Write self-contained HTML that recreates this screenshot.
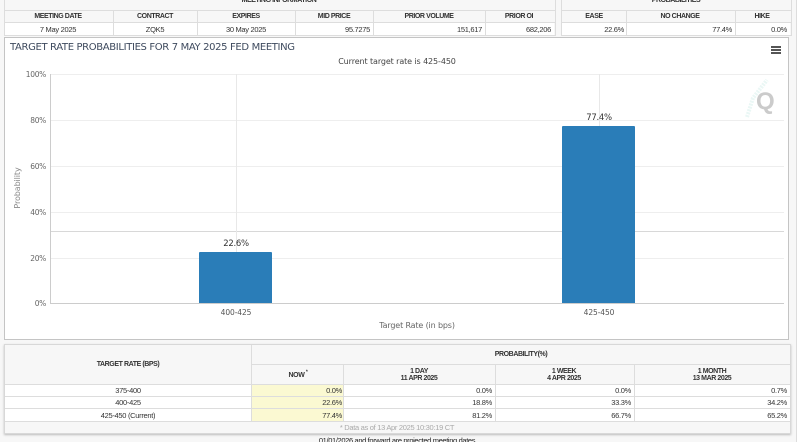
<!DOCTYPE html>
<html><head><meta charset="utf-8"><style>
html,body{margin:0;padding:0;background:#f7f7f7;}
#p{position:relative;width:800px;height:442px;overflow:hidden;background:#f7f7f7;font-family:"Liberation Sans",sans-serif;filter:blur(.35px);}
.a{position:absolute;}
.t{position:absolute;white-space:nowrap;line-height:1;}
.c{transform:translateX(-50%);}
.r{transform:translateX(-100%);}
.h{font-size:7px;font-weight:bold;color:#333;letter-spacing:-.42px;}
.v{font-size:7.5px;color:#333;letter-spacing:-.3px;}
.d{font-family:"DejaVu Sans",sans-serif;}
.y{font-size:7.5px;color:#666;letter-spacing:-.3px;}
.w{background:#fff;}
.l{position:absolute;background:#ddd;}
</style></head><body><div id="p">
<!-- top tables -->
<div class="a" style="left:4px;top:0;width:550px;height:35px;border:solid #ddd;border-width:0 1px 1px 1px"></div>
<div class="a" style="left:561px;top:0;width:229px;height:35px;border:solid #ddd;border-width:0 1px 1px 1px"></div>
<div class="a w" style="left:5px;top:23px;width:549px;height:12px"></div>
<div class="a w" style="left:562px;top:23px;width:228px;height:12px"></div>
<div class="l" style="left:4px;top:10px;width:551px;height:1px"></div>
<div class="l" style="left:4px;top:22px;width:551px;height:1px"></div>
<div class="l" style="left:561px;top:10px;width:230px;height:1px"></div>
<div class="l" style="left:561px;top:22px;width:230px;height:1px"></div>
<div class="l" style="left:113px;top:11px;width:1px;height:24px"></div>
<div class="l" style="left:197px;top:11px;width:1px;height:24px"></div>
<div class="l" style="left:295px;top:11px;width:1px;height:24px"></div>
<div class="l" style="left:373px;top:11px;width:1px;height:24px"></div>
<div class="l" style="left:485px;top:11px;width:1px;height:24px"></div>
<div class="l" style="left:626px;top:11px;width:1px;height:24px"></div>
<div class="l" style="left:735px;top:11px;width:1px;height:24px"></div>
<div class="t h c" style="left:279px;top:-3px">MEETING INFORMATION</div>
<div class="t h c" style="left:676px;top:-3px">PROBABILITIES</div>
<div class="t h c" style="left:58px;top:13px">MEETING DATE</div>
<div class="t h c" style="left:155px;top:13px">CONTRACT</div>
<div class="t h c" style="left:246px;top:13px">EXPIRES</div>
<div class="t h c" style="left:334px;top:13px">MID PRICE</div>
<div class="t h c" style="left:429px;top:13px">PRIOR VOLUME</div>
<div class="t h c" style="left:519px;top:13px">PRIOR OI</div>
<div class="t h c" style="left:594px;top:13px">EASE</div>
<div class="t h c" style="left:680px;top:13px">NO CHANGE</div>
<div class="t h c" style="left:762px;top:13px">HIKE</div>
<div class="t v c" style="left:58px;top:26px">7 May 2025</div>
<div class="t v c" style="left:155px;top:26px">ZQK5</div>
<div class="t v c" style="left:246px;top:26px">30 May 2025</div>
<div class="t v r" style="left:370px;top:26px">95.7275</div>
<div class="t v r" style="left:482px;top:26px">151,617</div>
<div class="t v r" style="left:551px;top:26px">682,206</div>
<div class="t v r" style="left:624px;top:26px">22.6%</div>
<div class="t v r" style="left:732px;top:26px">77.4%</div>
<div class="t v r" style="left:787px;top:26px">0.0%</div>
<!-- chart panel -->
<div class="a w" style="left:4px;top:37px;width:783px;height:301px;border:1px solid #c4c4c4"></div>
<div class="t d" style="left:10px;top:43px;font-size:10px;letter-spacing:-.35px;color:#3e4a5e">TARGET RATE PROBABILITIES FOR 7 MAY 2025 FED MEETING</div>
<div class="t d c" style="left:397px;top:58px;font-size:8px;letter-spacing:-.1px;color:#444">Current target rate is 425-450</div>
<div class="a" style="left:771px;top:46px;width:10px;height:2px;background:#555;box-shadow:0 3px 0 #555,0 6px 0 #555"></div>
<div class="l" style="left:51px;top:74px;width:733px;height:1px;background:#eee"></div>
<div class="l" style="left:51px;top:120px;width:733px;height:1px;background:#eee"></div>
<div class="l" style="left:51px;top:166px;width:733px;height:1px;background:#eee"></div>
<div class="l" style="left:51px;top:212px;width:733px;height:1px;background:#eee"></div>
<div class="l" style="left:51px;top:258px;width:733px;height:1px;background:#eee"></div>
<div class="l" style="left:51px;top:231px;width:733px;height:1px;background:#d8d8d8"></div>
<div class="l" style="left:236px;top:74px;width:1px;height:229px;background:#e8e8e8"></div>
<div class="l" style="left:599px;top:74px;width:1px;height:229px;background:#e8e8e8"></div>
<div class="l" style="left:50px;top:74px;width:1px;height:230px;background:#ccc"></div>
<div class="l" style="left:50px;top:303px;width:734px;height:1px;background:#ccc"></div>
<div class="a" style="left:199px;top:252px;width:73px;height:51px;background:#2a7db8;border-radius:1px 1px 0 0"></div>
<div class="a" style="left:562px;top:126px;width:73px;height:177px;background:#2a7db8;border-radius:1px 1px 0 0"></div>
<div class="t d c" style="left:236px;top:240px;font-size:8.5px;letter-spacing:-.3px;color:#333">22.6%</div>
<div class="t d c" style="left:599px;top:114px;font-size:8.5px;letter-spacing:-.3px;color:#333">77.4%</div>
<div class="t d r y" style="left:46px;top:71px">100%</div>
<div class="t d r y" style="left:46px;top:117px">80%</div>
<div class="t d r y" style="left:46px;top:163px">60%</div>
<div class="t d r y" style="left:46px;top:209px">40%</div>
<div class="t d r y" style="left:46px;top:255px">20%</div>
<div class="t d r y" style="left:46px;top:300px">0%</div>
<div class="t d c" style="left:236px;top:309px;font-size:7.5px;letter-spacing:-.1px;color:#555">400-425</div>
<div class="t d c" style="left:599px;top:309px;font-size:7.5px;letter-spacing:-.1px;color:#555">425-450</div>
<div class="t d c" style="left:417px;top:322px;font-size:8px;letter-spacing:-.15px;color:#666">Target Rate (in bps)</div>
<div class="t d" style="left:18px;top:188px;font-size:8px;letter-spacing:-.1px;color:#888;transform:translate(-50%,-50%) rotate(-90deg)">Probability</div>
<svg class="a" style="left:745px;top:78px" width="26" height="44"><path d="M2 39L8 20L22 2" stroke="#eaf7f5" stroke-width="4" stroke-dasharray="2 1" fill="none"/></svg>
<div class="t" style="left:756px;top:90px;font-size:24px;font-weight:bold;color:#cbcbcb">Q</div>
<!-- bottom table -->
<div class="a" style="left:4px;top:344px;width:785px;height:88px;border:1px solid #d8d8d8;box-shadow:0 1px 2px #bbb;background:#f7f7f7"></div>
<div class="a w" style="left:5px;top:385px;width:785px;height:36px"></div>
<div class="a" style="left:252px;top:385px;width:91px;height:36px;background:#fbf9d2"></div>
<div class="l" style="left:251px;top:345px;width:1px;height:76px"></div>
<div class="l" style="left:252px;top:364px;width:538px;height:1px"></div>
<div class="l" style="left:5px;top:384px;width:785px;height:1px"></div>
<div class="l" style="left:5px;top:396px;width:785px;height:1px"></div>
<div class="l" style="left:5px;top:408px;width:785px;height:1px"></div>
<div class="l" style="left:5px;top:421px;width:785px;height:1px"></div>
<div class="l" style="left:343px;top:365px;width:1px;height:56px"></div>
<div class="l" style="left:495px;top:365px;width:1px;height:56px"></div>
<div class="l" style="left:634px;top:365px;width:1px;height:56px"></div>
<div class="l" style="left:796px;top:0;width:1px;height:442px"></div>
<div class="a w" style="left:797px;top:0;width:3px;height:442px"></div>
<div class="t h c" style="left:128px;top:361px">TARGET RATE (BPS)</div>
<div class="t h c" style="left:521px;top:351px">PROBABILITY(%)</div>
<div class="t h c" style="left:298px;top:372px">NOW <sup style="font-size:5px;line-height:0">*</sup></div>
<div class="t h c" style="left:419px;top:368px">1 DAY</div>
<div class="t h c" style="left:419px;top:375px">11 APR 2025</div>
<div class="t h c" style="left:564px;top:368px">1 WEEK</div>
<div class="t h c" style="left:564px;top:375px">4 APR 2025</div>
<div class="t h c" style="left:712px;top:368px">1 MONTH</div>
<div class="t h c" style="left:712px;top:375px">13 MAR 2025</div>
<div class="t v c" style="left:128px;top:387px">375-400</div>
<div class="t v c" style="left:128px;top:399px">400-425</div>
<div class="t v c" style="left:128px;top:412px">425-450 (Current)</div>
<div class="t v r" style="left:342px;top:387px">0.0%</div>
<div class="t v r" style="left:342px;top:399px">22.6%</div>
<div class="t v r" style="left:342px;top:412px">77.4%</div>
<div class="t v r" style="left:492px;top:387px">0.0%</div>
<div class="t v r" style="left:492px;top:399px">18.8%</div>
<div class="t v r" style="left:492px;top:412px">81.2%</div>
<div class="t v r" style="left:631px;top:387px">0.0%</div>
<div class="t v r" style="left:631px;top:399px">33.3%</div>
<div class="t v r" style="left:631px;top:412px">66.7%</div>
<div class="t v r" style="left:787px;top:387px">0.7%</div>
<div class="t v r" style="left:787px;top:399px">34.2%</div>
<div class="t v r" style="left:787px;top:412px">65.2%</div>
<div class="t c" style="left:397px;top:424px;font-size:7.5px;letter-spacing:-.3px;color:#aaa">* Data as of 13 Apr 2025 10:30:19 CT</div>
<div class="t c" style="left:397px;top:437px;font-size:7.5px;letter-spacing:-.36px;color:#222">01/01/2026 and forward are projected meeting dates</div>
</div></body></html>
